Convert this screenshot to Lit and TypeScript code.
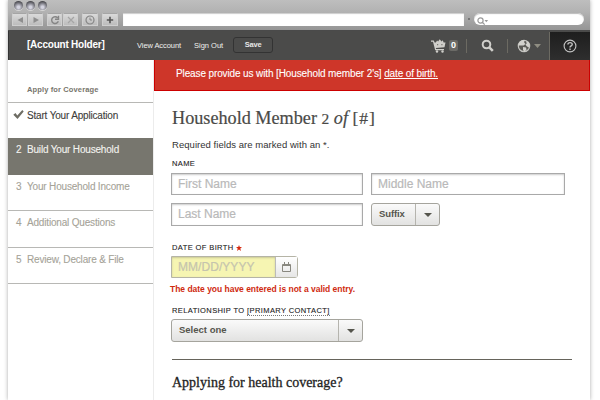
import { LitElement, html, css, svg } from "lit";
import { customElement } from "lit/decorators.js";
import { classMap } from "lit/directives/class-map.js";

const steps = [
  { n: "", label: "Start Your Application", cls: "done" },
  { n: "2", label: "Build Your Household", cls: "current" },
  { n: "3", label: "Your Household Income", cls: "todo" },
  { n: "4", label: "Additional Questions", cls: "todo" },
  { n: "5", label: "Review, Declare & File", cls: "todo" },
];

@customElement("browser-bar")
export class BrowserBar extends LitElement {
  static styles = css`
    :host { display: block; height: 31px; box-sizing: border-box; background: linear-gradient(#bebebe, #b2b2b2 40%, #959595); border-bottom: 1px solid #4a4a4a; }
    .lights { display: flex; gap: 3px; height: 13px; padding: 1px 0 0 6px; box-sizing: border-box; }
    .lights i { width: 9px; height: 9px; border-radius: 50%; background: radial-gradient(circle at 50% 70%, #d4d4e0 0 15%, #8d8d96 45%, #4c4c52 75%); box-shadow: 0 1px 0 #d5d5d5; }
    .tools { display: flex; padding-left: 4px; height: 14px; align-items: stretch; }
    .btn { width: 15px; height: 13px; box-sizing: border-box; background: linear-gradient(#dadada, #bcbcbc); border: 1px solid #cfcfcf; border-top-color: #a5a5a5; display: grid; place-items: center; }
    .next { margin-left: 1px; }
    .apart { margin-left: 4px; }
    .wide { width: 16px; }
    .btn svg { display: block; }
    .url { width: 341px; height: 13px; margin-left: 5px; background: #fff; box-shadow: inset 0 1px 1px #ccc; }
    .dot { width: 2px; height: 2px; background: #777; margin: 5px 4px 0 4px; }
    .search { width: 110px; height: 12px; border-radius: 6px; background: #fff; box-shadow: inset 0 1px 1px #bbb; padding-left: 3px; box-sizing: border-box; }
  `;
  render() {
    const icon = (c: unknown) => html`<svg width="12" height="10" viewBox="0 0 12 10" fill="none" stroke="#858585" stroke-width="1.4">${c}</svg>`;
    return html`
      <div class="lights"><i></i><i></i><i></i></div>
      <div class="tools">
        <span class="btn">${icon(svg`<path d="M9 2v6L3.500 5z" fill="#8e8e8e" stroke="none"/>`)}</span>
        <span class="btn next">${icon(svg`<path d="M3.500 2v6L9 5z" fill="#8e8e8e" stroke="none"/>`)}</span>
        <span class="btn apart">${icon(svg`<path d="M8.600 2.800A3.400 3.400 0 1 0 9.300 6.200M9.500 .8v3.500H6"/>`)}</span>
        <span class="btn next">${icon(svg`<path d="M3 2l6 6M9 2l-6 6" stroke="#a5a5a5" stroke-width="1.200"/>`)}</span>
        <span class="btn apart wide">${icon(svg`<circle cx="6" cy="5" r="4" stroke-width="1.200"/><path d="M6 2.500V5h2" stroke-width="1"/>`)}</span>
        <span class="btn apart wide">${icon(svg`<path d="M6 1.800v6.400M2.800 5h6.400" stroke="#555" stroke-width="1.600"/>`)}</span>
        <span class="url"></span><span class="dot"></span>
        <span class="search"><svg width="12" height="11" viewBox="0 0 12 11" fill="none" stroke="#999" stroke-width="1.200"><circle cx="3.500" cy="4.500" r="2.600"/><path d="M5.500 6.500l2.200 2.200"/><path d="M7.500 4h3.600l-1.800 2.200z" fill="#999" stroke="none"/></svg></span>
      </div>`;
  }
}

@customElement("account-nav")
export class AccountNav extends LitElement {
  static styles = css`
    :host { display: flex; height: 29px; box-sizing: border-box; background: #4b4b4a; color: #fff; border-left: 1px solid #333; align-items: center; font: 7.500px/10px "Liberation Sans", Arial, sans-serif; white-space: nowrap; }
    .holder { width: 110px; padding-left: 18px; box-sizing: border-box; font: bold 10px/12px "Liberation Sans", Arial, sans-serif; letter-spacing: -.226px; margin-top: -2px; }
    .view { width: 57px; margin-left: 18px; letter-spacing: -.07px; }
    .out { width: 39px; }
    .view, .out { color: #f0f0ee; }
    .save { width: 40px; height: 16px; border: 1px solid #333; border-radius: 3px; box-sizing: border-box; text-align: center; line-height: 14px; font-weight: bold; letter-spacing: -.2px; color: #e6e6e6; margin-top: -1px; }
    .grow { flex: 1; }
    .sep { width: 1px; height: 14px; background: #6c6a62; }
    .cart { display: flex; width: 35px; gap: 3px; align-items: center; }
    .count { width: 9px; height: 11px; border-radius: 2px; background: #6b6a66; text-align: center; font: bold 9px/11px "Liberation Sans", Arial, sans-serif; }
    .find { width: 40px; display: grid; place-items: center; }
    .lang { width: 41px; display: flex; align-items: center; gap: 3px; padding-left: 9px; box-sizing: border-box; }
    .help { width: 41px; height: 28px; background: linear-gradient(#1e1e1e, #2e2e2e); border-left: 1px solid #6c6a62; box-sizing: border-box; display: grid; place-items: center; }
    svg { display: block; }
  `;
  render() {
    return html`
      <div class="holder">[Account Holder]</div>
      <div class="view">View Account</div>
      <div class="out">Sign Out</div>
      <div class="save">Save</div>
      <div class="grow"></div>
      <div class="cart">
        <svg width="15" height="14" viewBox="0 0 15 14" fill="#cfceca"><path d="M0 1.500h2.800l.8 2h1.200l1.300-2 1 1L8.700.3 10.500 2.500l1.300-1.200.8 2.200H14.500l-1 4.800-8.700.7.3 1H13v1.200H4.200L2 2.800H0z"/><circle cx="6" cy="12.500" r="1.200"/><circle cx="11.500" cy="12.500" r="1.200"/><path d="M6 5h1.200v1.200H6zM10.300 5h1.200v1.200h-1.200z" fill="#7a7974"/></svg>
        <span class="count">0</span>
      </div>
      <span class="sep"></span>
      <div class="find"><svg width="13" height="13" viewBox="0 0 13 13" fill="none" stroke="#d0cfcb"><circle cx="5.500" cy="5.500" r="3.800" stroke-width="2"/><path d="M8.300 8.300l3.500 3.500" stroke-width="2.600"/></svg></div>
      <span class="sep"></span>
      <div class="lang">
        <svg width="14" height="14" viewBox="0 0 14 14"><circle cx="7" cy="7" r="5.700" fill="#5c5b57" stroke="#c4c3bf" stroke-width="1.200"/><path d="M1.500 6.500C1.500 3 4 1 7.500 1L7.200 3.500 8.500 5 6.500 6.500 4 6.500zM9 2l3 1.500 1 3.500-1.500 1.500L9.500 7 8.500 5.500l1.200-1zM6 8l3 .5.500 2L7.500 13 6 11z" fill="#d2d1cd"/></svg>
        <svg width="7" height="4" viewBox="0 0 7 4"><path d="M0 0h7L3.500 4z" fill="#8f8d82"/></svg>
      </div>
      <div class="help"><svg width="14" height="14" viewBox="0 0 14 14" fill="none" stroke="#c4c4c4"><circle cx="7" cy="7" r="5.900" stroke-width="1.100"/><path d="M4.900 5.600c0-2.700 4.300-2.600 4.300-.2C9.200 6.900 7 6.900 7 8.600M7 9.500v1.500" stroke-width="1.400"/></svg></div>`;
  }
}

@customElement("step-list")
export class StepList extends LitElement {
  static styles = css`
    :host { display: block; width: 146px; border-right: 1px solid #ececec; box-sizing: border-box; font: 10px/12px "Liberation Sans", Arial, sans-serif; color: #a5a398; white-space: nowrap; letter-spacing: -.18px; }
    .title { height: 43px; box-sizing: border-box; padding: 25px 0 0 19px; font: bold 7.500px/9px "Liberation Sans", Arial, sans-serif; letter-spacing: .128px; color: #77756c; border-bottom: 1px solid #b8b8b5; }
    .step { height: 36.500px; box-sizing: border-box; border-bottom: 1px solid #b8b8b5; display: flex; padding: 6px 0 0 8px; -webkit-text-stroke: .1px; }
    .num { width: 11px; }
    .done { height: 35px; color: #3d3d3a; padding: 7px 0 0 5px; border-bottom: none; }
    .done .num { width: 14px; }
    .current { background: #77766e; color: #f4f4f0; border-bottom: none; }
    svg { display: block; }
  `;
  render() {
    return html`
      <div class="title">Apply for Coverage</div>
      ${steps.map((s) => html`<div class=${classMap({ step: true, [s.cls]: true })}>
        <span class="num">${s.n || html`<svg width="11" height="10" viewBox="0 0 11 10"><path d="M.3 4.800l2.200-1.800 1.800 2.400L9.300 0l1.400 1.600L4.500 9z" fill="#6e6d64"/></svg>`}</span>
        <span>${s.label}</span></div>`)}`;
  }
}

@customElement("household-form")
export class HouseholdForm extends LitElement {
  static styles = css`
    :host { display: block; flex: 1; font: 9.500px/12px "Liberation Sans", Arial, sans-serif; color: #333; white-space: nowrap; }
    .banner { height: 31px; box-sizing: border-box; background: #ce3629; border: 1px solid #c00; border-top: none; color: #fff; font-size: 10px; letter-spacing: -.121px; line-height: 28px; padding-left: 21px; -webkit-text-stroke: .1px; }
    .body { padding-left: 17px; }
    h1 { margin: 0 0 0 1px; height: 46px; padding-top: 15px; box-sizing: border-box; font: 18.200px/24px "Liberation Serif", serif; color: #4a4a47; -webkit-text-stroke: .2px; }
    h1 .low { font-size: 15.500px; line-height: 1; }
    h1 .hash { font-size: 17.500px; letter-spacing: .9px; }
    .req { margin-left: 1px; height: 22px; padding-top: 2px; box-sizing: border-box; letter-spacing: .046px; }
    .lab { margin-left: 1px; font-size: 7.500px; line-height: 10px; letter-spacing: .4px; color: #222; -webkit-text-stroke: .1px; }
    .row { display: flex; gap: 8px; }
    .first { margin-top: 4px; }
    .second { margin-top: 8px; }
    .field { box-sizing: border-box; height: 22px; width: 192px; border: 1px solid #a9a9a9; box-shadow: inset 0 1px 2px #ccc; padding-left: 6px; font-size: 12px; line-height: 20px; color: #b9b9b9; -webkit-text-stroke: .2px; }
    .mid { width: 194px; }
    .second .field { height: 23px; }
    .pick { box-sizing: border-box; display: flex; height: 23px; border: 1px solid #a5a49d; border-radius: 3px; background: linear-gradient(#fafafa, #e2e2e1); font-weight: bold; color: #55554d; line-height: 20px; }
    .pick .t { flex: 1; padding-left: 7px; }
    .arrow { width: 23px; border-left: 1px solid #b5b4ae; display: grid; place-items: center; }
    .suffix { width: 69px; letter-spacing: -.1px; }
    .dob { margin-top: 17px; display: flex; gap: 2px; align-items: center; }
    .date { display: flex; margin-top: 3px; width: 127px; height: 22px; box-sizing: border-box; border: 1px solid #b5b4a6; border-radius: 0 3px 3px 0; }
    .date .v { width: 103px; background: #f6f5b2; box-shadow: inset 0 1px 2px #c9c996; color: #c5c4ae; font-size: 12px; line-height: 21px; letter-spacing: .048px; padding-left: 6px; box-sizing: border-box; -webkit-text-stroke: .2px; }
    .date .c { flex: 1; border-left: 1px solid #bbb; background: linear-gradient(#fff, #e6e6e6); display: grid; place-items: center; }
    .err { color: #cf2a10; font-weight: bold; font-size: 8.500px; letter-spacing: -.02px; margin: 5px 0 0 -1px; }
    .rel { margin-top: 11px; height: 13px; }
    .rel u { text-decoration: none; border-bottom: 1px dotted #777; }
    .sel { width: 192px; }
    hr { border: none; height: 1px; margin: 17px 0 0 1px; width: 400px; background: #66645b; }
    h2 { margin: 14px 0 0 1px; font: 14px/18px "Liberation Serif", serif; color: #1e1e1e; -webkit-text-stroke: .3px; }
    svg { display: block; }
  `;
  render() {
    const arrow = html`<span class="arrow"><svg width="8" height="4" viewBox="0 0 8 4"><path d="M0 0h8L4 4z" fill="#55554d"/></svg></span>`;
    return html`
      <div class="banner">Please provide us with [Household member 2's] <u>date of birth.</u></div>
      <div class="body">
        <h1>Household Member <span class="low">2</span> <i>of</i> <span class="hash">[#]</span></h1>
        <div class="req">Required fields are marked with an *.</div>
        <div class="lab">NAME</div>
        <div class="row first"><div class="field">First Name</div><div class="field mid">Middle Name</div></div>
        <div class="row second"><div class="field">Last Name</div><div class="pick suffix"><span class="t">Suffix</span>${arrow}</div></div>
        <div class="lab dob">DATE OF BIRTH<svg width="6" height="6" viewBox="0 0 6 6"><path d="M3 0l.8 2L6 2.100 4.300 3.500 5 6 3 4.600 1 6l.7-2.500L0 2.100 2.200 2z" fill="#d62a10"/></svg></div>
        <div class="date"><span class="v">MM/DD/YYYY</span><span class="c"><svg width="9" height="10" viewBox="0 0 9 10" fill="none" stroke="#88877f"><path d="M.5 2.500h8v7h-8zM.5 3.500h8M2.500 0v2M6.500 0v2"/></svg></span></div>
        <div class="err">The date you have entered is not a valid entry.</div>
        <div class="lab rel">RELATIONSHIP TO <u>[PRIMARY CONTACT]</u></div>
        <div class="pick sel"><span class="t">Select one</span>${arrow}</div>
        <hr /><h2>Applying for health coverage?</h2>
      </div>`;
  }
}

@customElement("app-root")
export class AppRoot extends LitElement {
  static styles = css`
    :host { display: block; width: 600px; height: 400px; overflow: hidden; background: #fff; }
    .win { width: 582px; height: 400px; margin-left: 8px; background: #fff; box-shadow: 0 0 4px #aaa; }
    .cols { display: flex; height: 340px; }
  `;
  render() {
    return html`<div class="win"><browser-bar></browser-bar><account-nav></account-nav><div class="cols"><step-list></step-list><household-form></household-form></div></div>`;
  }
}
